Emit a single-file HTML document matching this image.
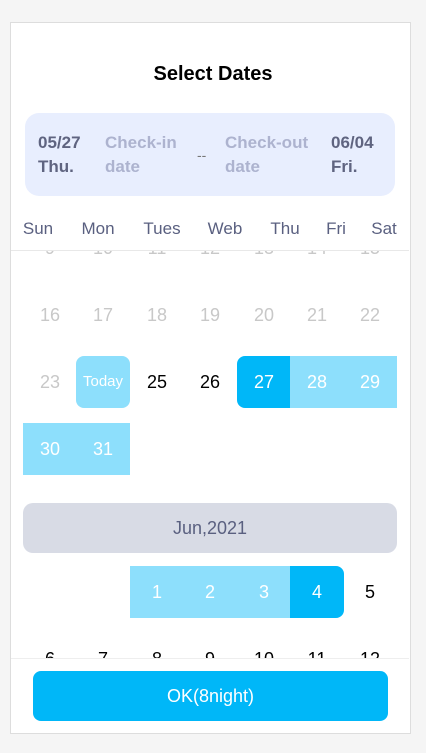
<!DOCTYPE html>
<html><head><style>
body{margin:0;width:426px;height:753px;background:#f5f5f5;font-family:"Liberation Sans","DejaVu Sans",sans-serif;position:relative;overflow:hidden}
.card{position:absolute;left:10px;top:22px;width:399px;height:710px;background:#fff;border:1px solid #ddd}
.t{position:absolute;top:63px;left:0;width:426px;text-align:center;font-weight:bold;font-size:20px;color:#000}
.bar{position:absolute;left:25px;top:113px;width:370px;height:83px;background:#e8eefe;border-radius:14px}
.bar div{position:absolute;font-size:17px;font-weight:bold;line-height:24px}
.wk{position:absolute;top:219px;font-size:17px;color:#5a6080;transform:translateX(-50%)}
.clip{position:absolute;left:11px;top:250px;width:398px;height:408px;overflow:hidden;border-top:1px solid #e8e8e8}
.in{position:absolute;left:0;top:-1px;width:398px;height:420px}
.c{position:absolute;width:54px;height:52px;line-height:52px;text-align:center;font-size:18px;color:#000}
.g{color:#c8c8c8}
.l{background:#8ddffc;color:#fff}
.d{background:#00b7f8;color:#fff}
.foot{position:absolute;left:11px;top:658px;width:398px;border-top:1px solid #eee}
.btn{position:absolute;left:33px;top:671px;width:355px;height:50px;background:#00b7f8;border-radius:8px;color:#fff;font-size:18px;text-align:center;line-height:50px}
</style></head><body>
<div class="card"></div>
<div class="t">Select Dates</div>
<div class="bar">
<div style="left:13px;top:18px;color:#5f6480">05/27<br>Thu.</div>
<div style="left:80px;top:18px;color:#adb3cf">Check-in<br>date</div>
<div style="left:172px;top:30px;color:#777;font-weight:normal;font-size:14px">--</div>
<div style="left:200px;top:18px;color:#adb3cf">Check-out<br>date</div>
<div style="left:306px;top:18px;color:#5f6480">06/04<br>Fri.</div>
</div>
<div class="wk" style="left:38px">Sun</div><div class="wk" style="left:98px">Mon</div><div class="wk" style="left:162px">Tues</div><div class="wk" style="left:225px">Web</div><div class="wk" style="left:285px">Thu</div><div class="wk" style="left:336px">Fri</div><div class="wk" style="left:384px">Sat</div>
<div class="clip"><div class="in">
<div class="c g" style="left:12px;top:-28px">9</div><div class="c g" style="left:65px;top:-28px">10</div><div class="c g" style="left:119px;top:-28px">11</div><div class="c g" style="left:172px;top:-28px">12</div><div class="c g" style="left:226px;top:-28px">13</div><div class="c g" style="left:279px;top:-28px">14</div><div class="c g" style="left:332px;top:-28px">15</div>
<div class="c g" style="left:12px;top:39px">16</div><div class="c g" style="left:65px;top:39px">17</div><div class="c g" style="left:119px;top:39px">18</div><div class="c g" style="left:172px;top:39px">19</div><div class="c g" style="left:226px;top:39px">20</div><div class="c g" style="left:279px;top:39px">21</div><div class="c g" style="left:332px;top:39px">22</div>
<div class="c g" style="left:12px;top:106px">23</div><div class="c l" style="left:65px;top:106px;border-radius:8px;font-size:15px">Today</div><div class="c" style="left:119px;top:106px">25</div><div class="c" style="left:172px;top:106px">26</div><div class="c d" style="left:226px;top:106px;border-radius:8px 0 0 8px">27</div><div class="c l" style="left:279px;top:106px">28</div><div class="c l" style="left:332px;top:106px">29</div>
<div class="c l" style="left:12px;top:173px">30</div><div class="c l" style="left:65px;top:173px">31</div>
<div style="position:absolute;left:12px;top:253px;width:374px;height:50px;background:#d8dbe5;border-radius:10px;text-align:center;line-height:50px;font-size:18px;color:#5a6080">Jun,2021</div>
<div class="c l" style="left:119px;top:316px">1</div><div class="c l" style="left:172px;top:316px">2</div><div class="c l" style="left:226px;top:316px">3</div><div class="c d" style="left:279px;top:316px;border-radius:0 8px 8px 0">4</div><div class="c" style="left:332px;top:316px">5</div>
<div class="c" style="left:12px;top:383px">6</div><div class="c" style="left:65px;top:383px">7</div><div class="c" style="left:119px;top:383px">8</div><div class="c" style="left:172px;top:383px">9</div><div class="c" style="left:226px;top:383px">10</div><div class="c" style="left:279px;top:383px">11</div><div class="c" style="left:332px;top:383px">12</div>
</div></div>
<div class="foot"></div>
<div class="btn">OK(8night)</div>
</body></html>
